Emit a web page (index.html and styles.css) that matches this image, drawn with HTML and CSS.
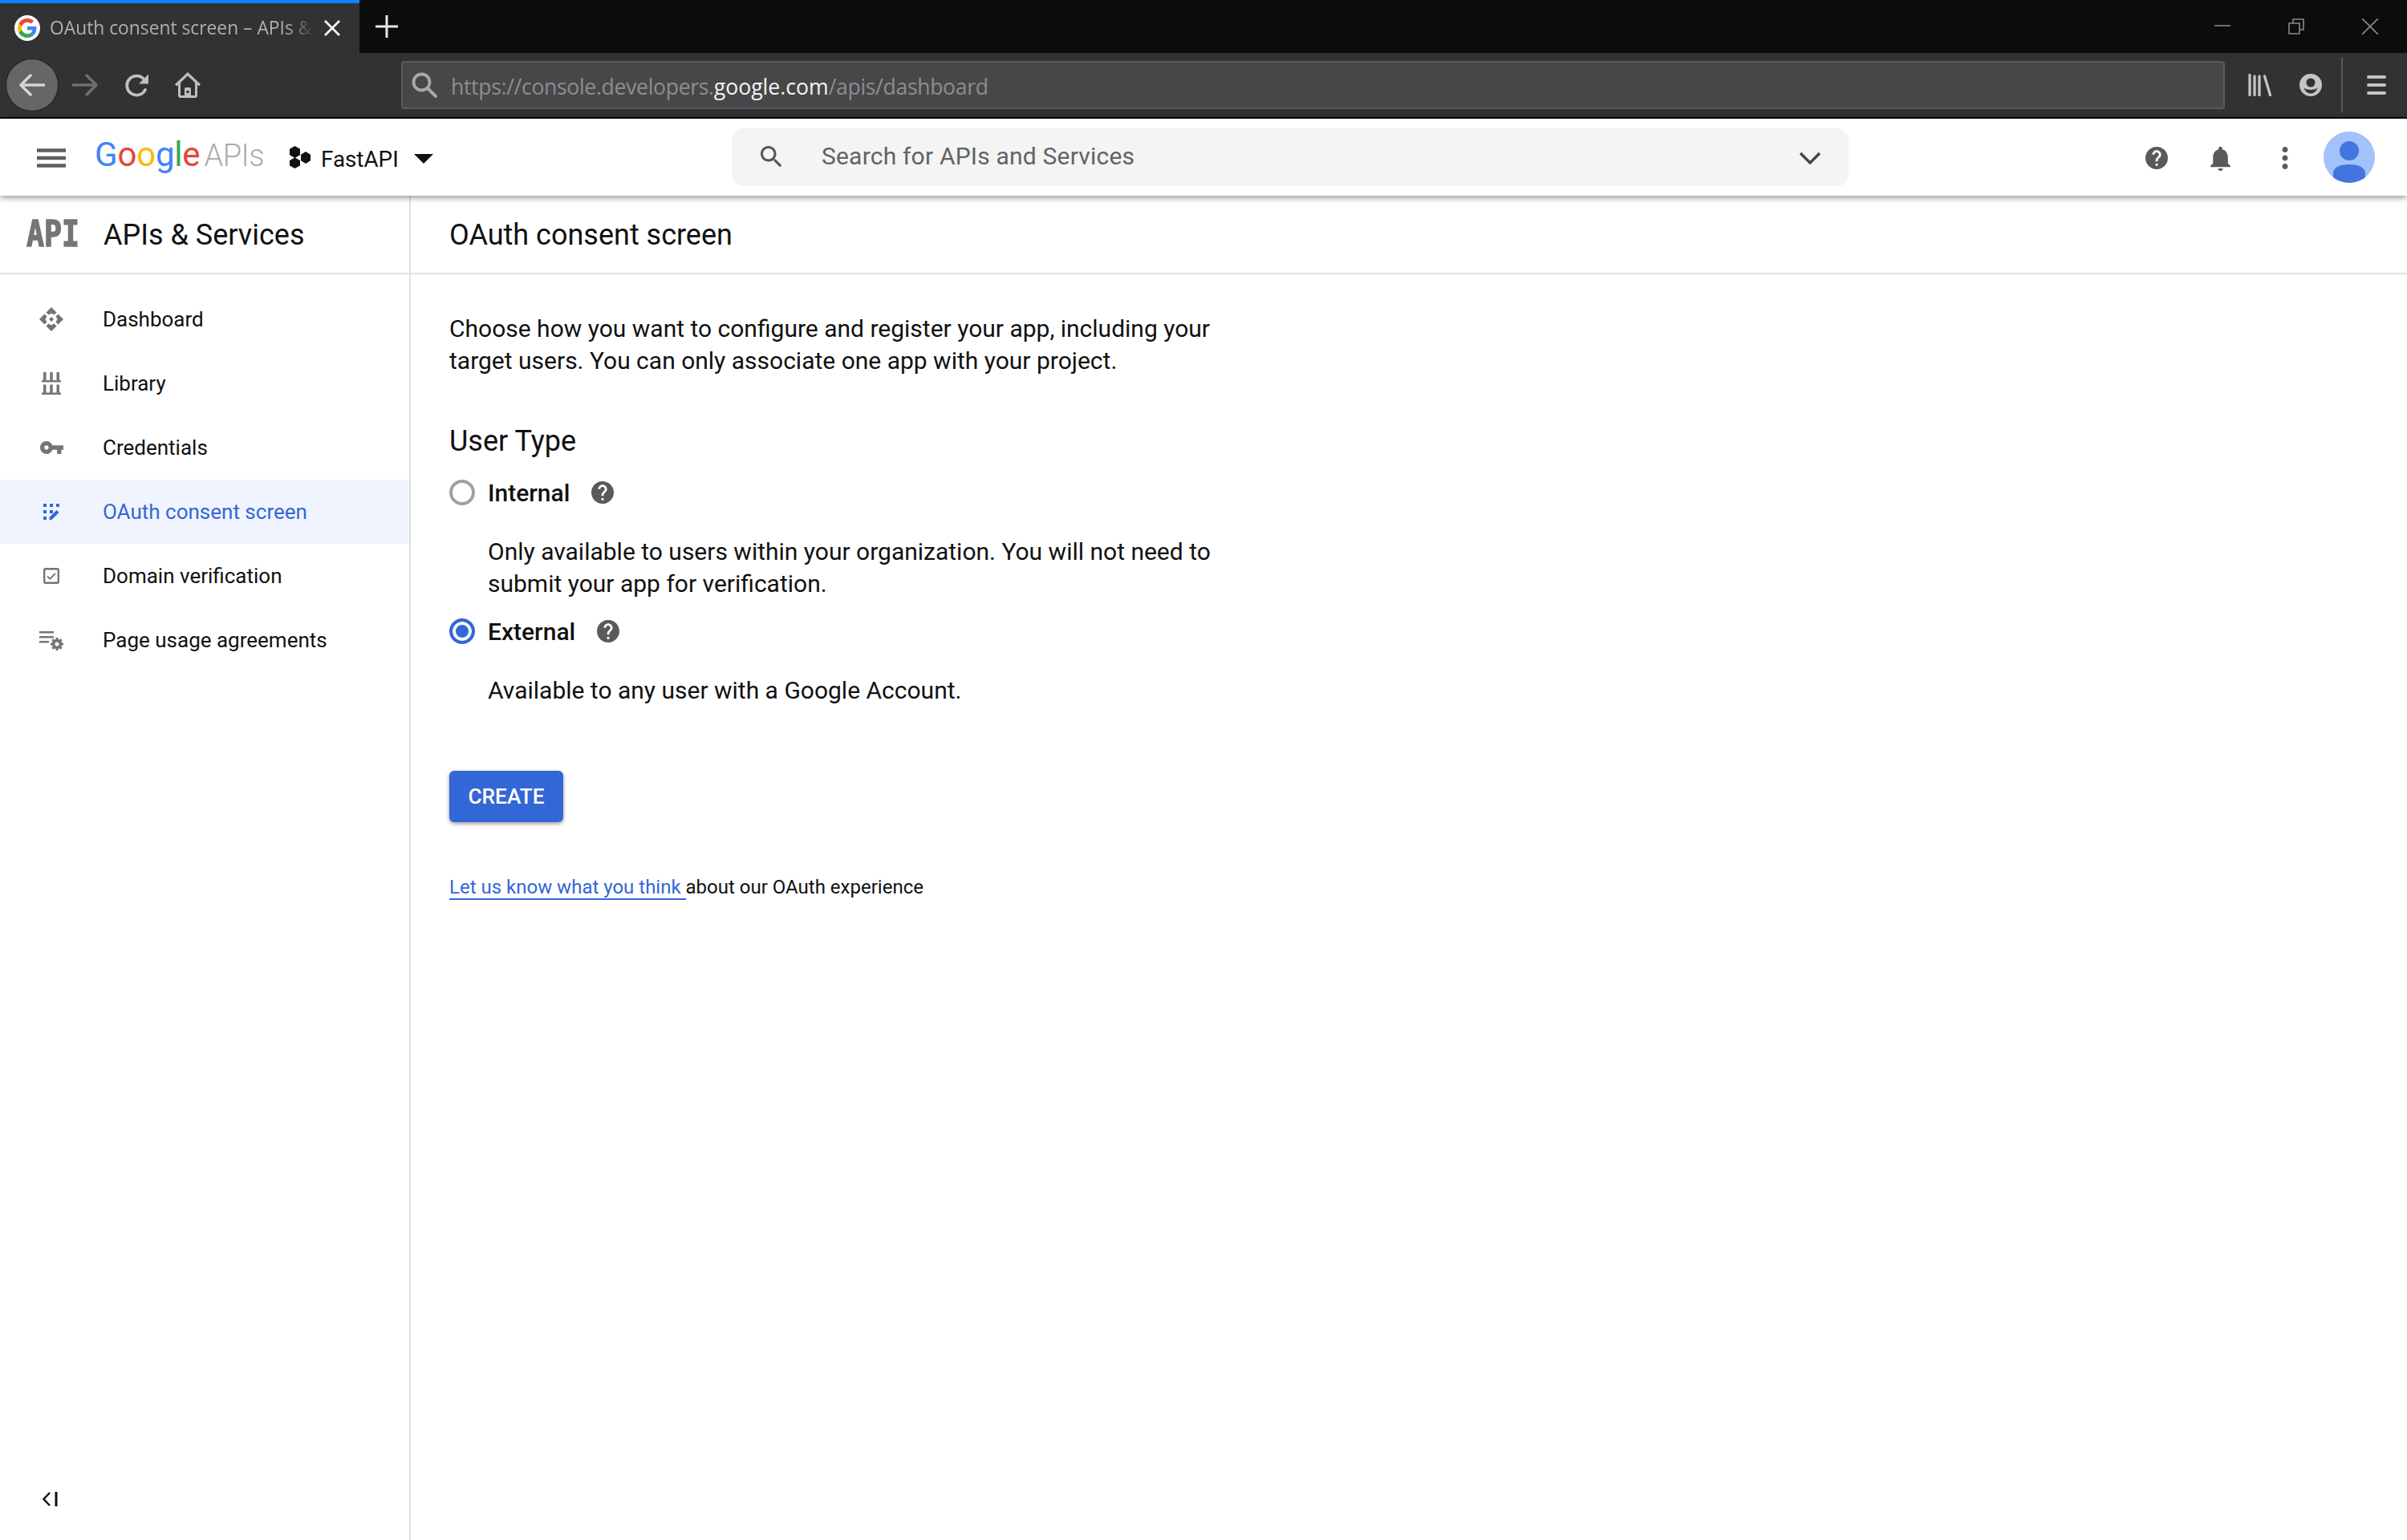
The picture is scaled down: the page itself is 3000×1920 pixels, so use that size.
FILE: index.html
```html
<!DOCTYPE html>
<html lang="en">
<head>
<meta charset="utf-8">
<title>OAuth consent screen</title>
<link rel="stylesheet" href="styles.css">
</head>
<body>
<div class="tabstrip">
  <div class="tab">
    <span class="favicon">
      <svg viewBox="0 0 48 48" width="24" height="24"><path fill="#EA4335" d="M24 9.5c3.54 0 6.71 1.22 9.21 3.6l6.85-6.85C35.9 2.38 30.47 0 24 0 14.62 0 6.51 5.38 2.56 13.22l7.98 6.19C12.43 13.72 17.74 9.5 24 9.5z"/><path fill="#4285F4" d="M46.98 24.55c0-1.57-.15-3.09-.38-4.55H24v9.02h12.94c-.58 2.96-2.26 5.48-4.78 7.18l7.73 6c4.51-4.18 7.09-10.36 7.09-17.65z"/><path fill="#FBBC05" d="M10.53 28.59c-.48-1.45-.76-2.99-.76-4.59s.27-3.14.76-4.59l-7.98-6.19C.92 16.46 0 20.12 0 24c0 3.88.92 7.54 2.56 10.78l7.97-6.19z"/><path fill="#34A853" d="M24 48c6.48 0 11.93-2.13 15.89-5.81l-7.73-6c-2.15 1.45-4.92 2.3-8.16 2.3-6.26 0-11.57-4.22-13.47-9.91l-7.98 6.19C6.51 42.62 14.62 48 24 48z"/></svg>
    </span>
    <span class="tab-title">OAuth consent screen – APIs &amp;</span>
    <svg class="tab-close" viewBox="0 0 20 20" width="20" height="20"><path d="M1 1l18 18M19 1L1 19" stroke="#fff" stroke-width="2.6" fill="none"/></svg>
  </div>
  <svg class="newtab" viewBox="0 0 28 28" width="28" height="28"><path d="M14 0v28M0 14h28" stroke="#e8e8e8" stroke-width="3" fill="none"/></svg>
  <div class="winctl">
    <svg viewBox="0 0 20 20" width="20" height="20"><path d="M0 9h20" stroke="#8a8a8a" stroke-width="1.6"/></svg>
    <svg viewBox="0 0 20 20" width="20" height="20"><path d="M1 6h13v13H1zM6 6V1h13v13h-5" stroke="#8a8a8a" stroke-width="1.6" fill="none"/></svg>
    <svg viewBox="0 0 20 20" width="20" height="20"><path d="M0 0l20 20M20 0L0 20" stroke="#8a8a8a" stroke-width="1.6" fill="none"/></svg>
  </div>
</div>

<div class="toolbar">
  <span class="backbtn">
    <svg viewBox="0 0 32 28" width="32" height="28"><path d="M14 2L2 14l12 12M2 14h29" stroke="#d6d6d6" stroke-width="3.4" fill="none" stroke-linecap="round" stroke-linejoin="round"/></svg>
  </span>
  <svg class="fwd" viewBox="0 0 32 28" width="32" height="28"><path d="M18 2l12 12-12 12M30 14H1" stroke="#707072" stroke-width="3.4" fill="none" stroke-linecap="round" stroke-linejoin="round"/></svg>
  <svg class="reload" viewBox="0 0 30 30" width="30" height="30"><path d="M25 21a12 12 0 1 1-1.500-13" stroke="#bfbfbf" stroke-width="3.800" fill="none" stroke-linecap="round"/><path d="M29 1.500v12H17z" fill="#bfbfbf"/></svg>
  <svg class="home" viewBox="0 0 32 32" width="32" height="32"><path fill="#bfbfbf" fill-rule="evenodd" d="M16 0L32 15l-2 2.6-2-1.8V29a3 3 0 0 1-3 3H7a3 3 0 0 1-3-3V15.800L2 17.600 0 15zM16 4.500L7 13v16h5v-8a2 2 0 0 1 2-2h4a2 2 0 0 1 2 2v8h5V13zM14.500 23v3h3v-3z"/></svg>
  <div class="urlbar">
    <svg class="url-search" viewBox="0 0 32 32" width="32" height="32"><circle cx="12.500" cy="12.500" r="10" stroke="#a8a8a8" stroke-width="3.800" fill="none"/><path d="M20 20l10 10" stroke="#a8a8a8" stroke-width="4" stroke-linecap="round"/></svg>
    <span class="url-text">https://console.developers.<b class="url-domain">google.com</b>/apis/dashboard</span>
  </div>
  <svg class="library" viewBox="0 0 30 28" width="30" height="28"><path d="M2 1.500v25M8 3v23.500M14 3v23.500M20.500 3l7 23.500" stroke="#c4c4c4" stroke-width="3.300" fill="none" stroke-linecap="round"/></svg>
  <svg class="account" viewBox="0 0 28 28" width="28" height="28"><path fill="#c4c4c4" fill-rule="evenodd" d="M14 0a14 14 0 1 1 0 28A14 14 0 0 1 14 0zm0 5.500a5.500 5.500 0 1 0 0 11 5.500 5.500 0 0 0 0-11zM5.500 17.500C7 22 10 24.500 14 24.500s7-2.500 8.500-7c-2 1.700-5 2.500-8.500 2.500s-6.500-.8-8.500-2.500z"/></svg>
  <span class="tb-sep"></span>
  <svg class="menu" viewBox="0 0 24 24" width="24" height="24"><path d="M2 2h20M2 12h20M2 22h20" stroke="#c4c4c4" stroke-width="4" stroke-linecap="round"/></svg>
</div>

<header class="appbar">
  <div class="appbar-left">
    <svg class="hamburger" viewBox="0 0 36 24" width="36" height="24"><path d="M0 2.500h36M0 12h36M0 21.500h36" stroke="#5f5f5f" stroke-width="4.500"/></svg>
    <div class="logo"><span class="g-blue">G</span><span class="g-red">o</span><span class="g-yellow">o</span><span class="g-blue">g</span><span class="g-green">l</span><span class="g-red">e</span><span class="g-apis">APIs</span></div>
    <svg class="hexes" viewBox="0 0 26 28" width="26" height="28"><path d="M6.500 0L13 3.750v7.500L6.500 15 0 11.250v-7.500zM6.500 14.500L13 18v6.500L6.500 28 0 24.500V18zM20 7l6 3.750v7.500L20 22l-6-3.750v-7.500z" fill="#111"/></svg>
    <span class="project">FastAPI</span>
    <span class="caret"></span>
  </div>
  <div class="searchbox">
    <svg class="sb-icon" viewBox="3 3 18 18" width="27" height="27"><path fill="#555" d="M15.500 14h-.79l-.28-.27C15.410 12.590 16 11.110 16 9.500 16 5.910 13.090 3 9.500 3S3 5.910 3 9.500 5.910 16 9.500 16c1.610 0 3.090-.59 4.230-1.570l.27.28v.79l5 4.990L20.490 19l-4.990-5zm-6 0C7.010 14 5 11.990 5 9.500S7.010 5 9.500 5 14 7.010 14 9.500 11.990 14 9.500 14z"/></svg>
    <span class="sb-text">Search for APIs and Services</span>
    <svg class="sb-chev" viewBox="0 0 28 16" width="28" height="16"><path d="M2 2l12 12L26 2" stroke="#444" stroke-width="3.400" fill="none"/></svg>
  </div>
  <div class="appbar-right">
    <svg class="ab-icon ab-help" viewBox="2 2 20 20" width="28" height="28"><path fill="#5a5a5a" d="M12 2C6.480 2 2 6.480 2 12s4.480 10 10 10 10-4.480 10-10S17.520 2 12 2zm1 17h-2v-2h2v2zm2.070-7.750l-.9.920C13.450 12.900 13 13.500 13 15h-2v-.5c0-1.100.45-2.100 1.170-2.830l1.240-1.260c.37-.36.59-.86.59-1.410 0-1.100-.9-2-2-2s-2 .9-2 2H8c0-2.210 1.790-4 4-4s4 1.790 4 4c0 .88-.36 1.680-.93 2.250z"/></svg>
    <svg class="ab-icon ab-bell" viewBox="4 2 16 20" width="25" height="31"><path fill="#5a5a5a" d="M12 22c1.100 0 2-.9 2-2h-4c0 1.100.89 2 2 2zm6-6v-5c0-3.070-1.640-5.640-4.500-6.320V4c0-.83-.67-1.500-1.500-1.500s-1.500.67-1.500 1.500v.68C7.630 5.360 6 7.920 6 11v5l-2 2v1h16v-1l-2-2z"/></svg>
    <svg class="ab-icon ab-more" viewBox="10 4 4 16" width="8" height="28"><path fill="#5a5a5a" d="M12 8c1.100 0 2-.9 2-2s-.9-2-2-2-2 .9-2 2 .9 2 2 2zm0 2c-1.100 0-2 .9-2 2s.9 2 2 2 2-.9 2-2-.9-2-2-2zm0 6c-1.100 0-2 .9-2 2s.9 2 2 2 2-.9 2-2-.9-2-2-2z"/></svg>
    <svg class="avatar" viewBox="0 0 64 64" width="64" height="64"><defs><clipPath id="av"><circle cx="32" cy="32" r="32"/></clipPath></defs><circle cx="32" cy="32" r="32" fill="#a1c2fa"/><g clip-path="url(#av)"><circle cx="32" cy="24" r="12" fill="#4475de"/><path d="M12 64V52c0-8 10-11 20-11s20 3 20 11v12z" fill="#4475de"/></g></svg>
  </div>
</header>

<div class="page">
  <aside class="sidebar">
    <div class="side-head">
      <span class="api-mark">API</span>
      <span class="side-title">APIs &amp; Services</span>
    </div>
    <nav class="side-nav">
      <a class="nav-row"><span class="nav-ic"><svg viewBox="0 0 32 32" width="32" height="32"><path fill="#757575" d="M16 1l6.500 6.500-3 3-3.500-2-3.500 2-3-3zM16 31l-6.500-6.500 3-3 3.500 2 3.500-2 3 3zM1 16l6.500-6.500 3 3-2 3.500 2 3.500-3 3zM31 16l-6.500 6.500-3-3 2-3.500-2-3.500 3-3zM16 13l3 3-3 3-3-3z"/></svg></span>Dashboard</a>
      <a class="nav-row"><span class="nav-ic"><svg viewBox="0 0 24 28" width="24" height="28"><path fill="#757575" d="M2 0h3.500v10H2zM10.250 0h3.500v10h-3.500zM18.500 0H22v10h-3.500zM0 10h24v2.500H0zM2 15.500h3.500v10H2zM10.250 15.500h3.500v10h-3.500zM18.500 15.500H22v10h-3.500zM0 25.500h24V28H0z"/></svg></span>Library</a>
      <a class="nav-row"><span class="nav-ic"><svg viewBox="1 6 22 12" width="29" height="16"><path fill="#757575" d="M12.650 10C11.830 7.670 9.610 6 7 6c-3.310 0-6 2.690-6 6s2.690 6 6 6c2.610 0 4.830-1.670 5.650-4H17v4h4v-4h2v-4H12.650zM7 14c-1.100 0-2-.9-2-2s.9-2 2-2 2 .9 2 2-.9 2-2 2z"/></svg></span>Credentials</a>
      <a class="nav-row nav-active"><span class="nav-ic"><svg viewBox="0 0 20 20" width="20" height="20"><path fill="#3367d6" d="M0 0h4v4H0zM8 0h4v4H8zM16 0h4v4h-4zM0 8h4v4H0zM8 8h4v4H8zM0 16h4v4H0zM7.500 20v-3L16.500 8l3 3-9 9z"/></svg></span>OAuth consent screen</a>
      <a class="nav-row"><span class="nav-ic"><svg viewBox="0 0 20 20" width="20" height="20"><rect x="1.200" y="1.200" width="17.600" height="17.600" rx="1.500" fill="none" stroke="#757575" stroke-width="2.400"/><path d="M5 10.500l3.200 3.200L15 7" fill="none" stroke="#757575" stroke-width="1.800"/></svg></span>Domain verification</a>
      <a class="nav-row"><span class="nav-ic"><svg viewBox="0 0 30 25" width="30" height="25"><path fill="#757575" d="M0 1h18v2.500H0zM0 7h18v2.500H0zM0 13h12v2.500H0z"/><circle cx="22" cy="17" r="4.500" fill="none" stroke="#757575" stroke-width="3.500"/><path d="M22 9v16M14 17h16M16.300 11.300l11.400 11.400M27.700 11.300L16.300 22.700" stroke="#757575" stroke-width="3"/><circle cx="22" cy="17" r="2.500" fill="#fff"/></svg></span>Page usage agreements</a>
    </nav>
    <div class="side-foot">
      <svg viewBox="0 0 19 18" width="19" height="18"><path d="M9 1L1.500 9 9 17" stroke="#111" stroke-width="2.400" fill="none"/><path d="M17 0v18" stroke="#111" stroke-width="3"/></svg>
    </div>
  </aside>
  <main class="content">
    <div class="content-head">OAuth consent screen</div>
    <div class="content-body">
      <p class="lead">Choose how you want to configure and register your app, including your target users. You can only associate one app with your project.</p>
      <h2 class="section">User Type</h2>
      <div class="option">
        <span class="radio"></span>
        <span class="opt-name">Internal</span>
        <svg class="opt-help" viewBox="2 2 20 20" width="28" height="28"><path fill="#5a5a5a" d="M12 2C6.480 2 2 6.480 2 12s4.480 10 10 10 10-4.480 10-10S17.520 2 12 2zm1 17h-2v-2h2v2zm2.070-7.750l-.9.920C13.450 12.900 13 13.500 13 15h-2v-.5c0-1.100.45-2.100 1.170-2.830l1.240-1.260c.37-.36.59-.86.59-1.410 0-1.100-.9-2-2-2s-2 .9-2 2H8c0-2.210 1.790-4 4-4s4 1.790 4 4c0 .88-.36 1.680-.93 2.250z"/></svg>
      </div>
      <p class="opt-desc">Only available to users within your organization. You will not need to submit your app for verification.</p>
      <div class="option option-ext">
        <span class="radio radio-on"></span>
        <span class="opt-name">External</span>
        <svg class="opt-help" viewBox="2 2 20 20" width="28" height="28"><path fill="#5a5a5a" d="M12 2C6.480 2 2 6.480 2 12s4.480 10 10 10 10-4.480 10-10S17.520 2 12 2zm1 17h-2v-2h2v2zm2.070-7.750l-.9.920C13.450 12.900 13 13.500 13 15h-2v-.5c0-1.100.45-2.100 1.170-2.830l1.240-1.260c.37-.36.59-.86.59-1.410 0-1.100-.9-2-2-2s-2 .9-2 2H8c0-2.210 1.790-4 4-4s4 1.790 4 4c0 .88-.36 1.680-.93 2.250z"/></svg>
      </div>
      <p class="opt-desc">Available to any user with a Google Account.</p>
      <button class="create">CREATE</button>
      <p class="feedback"><a class="fb-link">Let us know what you think </a>about our OAuth experience</p>
    </div>
  </main>
</div>
</body>
</html>
```
FILE: styles.css
```css
* { box-sizing: border-box; }
html, body { margin: 0; padding: 0; width: 3000px; height: 1920px; overflow: hidden; background: #fff; }
body { display: flex; flex-direction: column; font-family: Roboto, sans-serif; color: #111; }
svg { display: block; flex: none; }

.tabstrip { height: 66px; background: #0c0c0c; display: flex; align-items: stretch; flex: none; }
.tab { width: 448px; background: #323234; border-top: 4px solid #0a84ff; display: flex; align-items: center; padding-left: 18px; }
.favicon { width: 32px; height: 32px; border-radius: 50%; background: #fff; display: flex; align-items: center; justify-content: center; flex: none; margin-top: -1px; }
.tab-title { font-family: "Open Sans", sans-serif; font-size: 22.8px; color: #b0b0b2; margin-left: 12px; width: 330px; white-space: nowrap; margin-top: -1px;
  -webkit-mask-image: linear-gradient(to right, #000 295px, transparent 330px); mask-image: linear-gradient(to right, #000 295px, transparent 330px); }
.tab-close { margin-left: 12px; }
.newtab { margin: 19px 0 0 20px; }
.winctl { margin-left: auto; display: flex; gap: 72px; padding: 23px 36px 0 0; }

.toolbar { height: 82px; background: #323234; border-bottom: 2px solid #0c0c0c; display: flex; align-items: center; padding-left: 8px; flex: none; }
.backbtn { width: 64px; height: 64px; border-radius: 50%; background: #666668; box-shadow: 0 0 0 1px #222; display: flex; align-items: center; justify-content: center; flex: none; }
.fwd { margin-left: 18px; }
.reload { margin-left: 34px; }
.home { margin-left: 32px; }
.urlbar { width: 2273px; height: 60px; margin-left: 250px; background: #474749; border: 2px solid #5a5a5c; border-radius: 4px; display: flex; align-items: center; padding-left: 11px; flex: none; }
.url-text { font-family: "Open Sans", sans-serif; font-size: 26.6px; color: #8d8d8f; margin-left: 17px; white-space: nowrap; letter-spacing: -0.34px; position: relative; top: 2px; }
.url-domain { font-weight: 400; color: #f4f4f4; letter-spacing: 0; }
.library { margin-left: 29px; }
.account { margin-left: 34px; }
.tb-sep { width: 2px; height: 68px; background: #58585a; margin-left: 24px; flex: none; }
.menu { margin-left: 30px; }

.appbar { height: 96px; background: #fff; display: flex; align-items: center; padding-left: 46px; position: relative; z-index: 2; box-shadow: 0 2px 8px rgba(0,0,0,.45); flex: none; }
.appbar-left { width: 866px; display: flex; align-items: center; flex: none; }
.hamburger { margin-top: 2px; }
.logo { font-family: Roboto, sans-serif; font-size: 42px; font-weight: 400; margin-left: 36px; width: 215px; white-space: nowrap; letter-spacing: -0.2px; margin-top: -7px; flex: none; }
.g-blue { color: #4285f4; } .g-red { color: #ea4335; } .g-yellow { color: #fbbc05; } .g-green { color: #34a853; }
.g-apis { color: #ababab; font-weight: 300; font-size: 38px; letter-spacing: -0.5px; margin-left: 5px; }
.hexes { margin-left: 28px; }
.project { font-size: 27.8px; margin-left: 13px; color: #111; position: relative; top: 2px; }
.caret { width: 0; height: 0; border-left: 12px solid transparent; border-right: 12px solid transparent; border-top: 12px solid #111; margin: 4px 0 0 19px; flex: none; }
.searchbox { width: 1392px; height: 72px; background: #f4f4f4; border-radius: 14px; display: flex; align-items: center; padding-left: 36px; flex: none; }
.sb-icon { margin-top: -1px; }
.sb-text { font-size: 30px; color: #5f6368; margin: -3px 0 0 49px; letter-spacing: 0.2px; }
.sb-chev { margin-left: auto; margin-right: 34px; margin-top: 2px; }
.appbar-right { margin-left: auto; display: flex; align-items: center; padding-right: 40px; }
.ab-icon { margin-top: 2px; }
.ab-help { margin-right: 53px; }
.ab-bell { margin-right: 64px; }
.ab-more { margin-right: 44px; }

.page { flex: 1; display: flex; min-height: 0; }
.sidebar { width: 512px; border-right: 2px solid #e0e0e0; display: flex; flex-direction: column; flex: none; }
.side-head { height: 98px; border-bottom: 2px solid #e0e0e0; display: flex; align-items: center; padding: 1px 0 0 33px; flex: none; }
.api-mark { display: block; font-family: "DejaVu Sans Mono", monospace; font-weight: 700; font-size: 36.5px; line-height: 44px; color: #757575; width: 96px; transform: scaleY(1.2); transform-origin: left center; -webkit-text-stroke: 1.2px #757575; }
.side-title { font-size: 36px; color: #111; }
.side-nav { padding-top: 16px; display: flex; flex-direction: column; }
.nav-row { height: 80px; display: flex; align-items: center; font-size: 26px; color: #111; }
.nav-ic { width: 128px; display: flex; justify-content: center; flex: none; }
.nav-active { background: #f0f4fe; color: #3367d6; }
.side-foot { margin-top: auto; padding: 0 0 42px 53px; }

.content { flex: 1; display: flex; flex-direction: column; }
.content-head { height: 98px; border-bottom: 2px solid #e0e0e0; display: flex; align-items: center; padding: 1px 0 0 48px; font-size: 36px; color: #111; flex: none; }
.content-body { padding: 0 0 0 48px; }
.lead { width: 960px; margin: 48px 0 0; font-size: 30px; line-height: 40px; }
.section { font-size: 36px; font-weight: 400; margin: 58px 0 0; line-height: 44px; }
.option { display: flex; align-items: center; height: 40px; margin-top: 22px; }
.option-ext { margin-top: 19px; }
.radio { width: 32px; height: 32px; border-radius: 50%; border: 4px solid #a0a0a0; flex: none; }
.radio-on { border-color: #3367d6; background: #3367d6; box-shadow: inset 0 0 0 4px #fff; }
.opt-name { font-size: 30px; font-weight: 500; margin-left: 16px; }
.opt-help { margin-left: 27px; }
.opt-desc { width: 960px; margin: 34px 0 0 48px; font-size: 30px; line-height: 40px; }
.create { display: block; margin: 80px 0 0; width: 142px; height: 64px; background: #3367d6; color: #fff; border: 0; border-radius: 6px; font-family: Roboto, sans-serif; font-weight: 500; font-size: 26.25px; padding: 0; box-shadow: 0 2px 5px rgba(0,0,0,.4); }
.feedback { margin: 63px 0 0; font-size: 24px; line-height: 36px; }
.fb-link { color: #3367d6; border-bottom: 2px solid #3367d6; }
```
